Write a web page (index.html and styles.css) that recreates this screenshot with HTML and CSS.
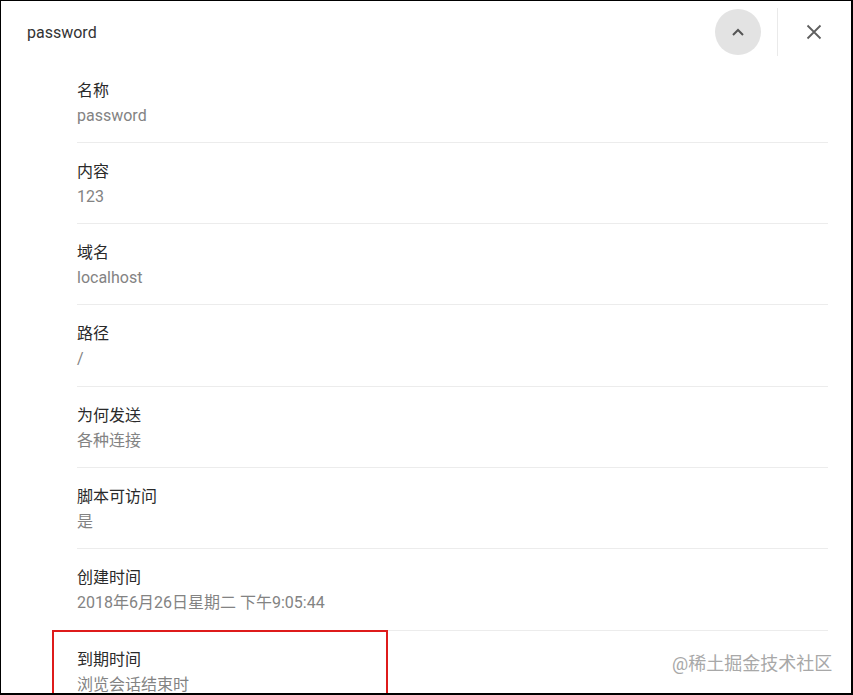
FILE: index.html
```html
<!DOCTYPE html>
<html lang="zh-CN">
<head>
<meta charset="utf-8">
<link rel="stylesheet" href="styles.css">
</head>
<body>
<div class="frame">
  <div class="header">
    <div class="title">password</div>
    <div class="actions">
      <button class="collapse" aria-label="collapse">
        <svg width="14" height="10" viewBox="0 0 14 10"><path d="M2 8 L7 3 L12 8" fill="none" stroke="#555" stroke-width="2"/></svg>
      </button>
      <div class="vdiv"></div>
      <button class="close" aria-label="close">
        <svg width="16" height="16" viewBox="0 0 16 16"><path d="M1.5 1.5 L14.5 14.5 M14.5 1.5 L1.5 14.5" fill="none" stroke="#5f5f5f" stroke-width="1.8"/></svg>
      </button>
    </div>
  </div>
  <div class="rows">
    <div class="row"><div class="label">名称</div><div class="value">password</div></div>
    <div class="row"><div class="label">内容</div><div class="value">123</div></div>
    <div class="row"><div class="label">域名</div><div class="value">localhost</div></div>
    <div class="row"><div class="label">路径</div><div class="value">/</div></div>
    <div class="row"><div class="label">为何发送</div><div class="value">各种连接</div></div>
    <div class="row"><div class="label">脚本可访问</div><div class="value">是</div></div>
    <div class="row"><div class="label">创建时间</div><div class="value">2018年6月26日星期二 下午9:05:44</div></div>
    <div class="row"><div class="label">到期时间</div><div class="value">浏览会话结束时</div></div>
  </div>
  <div class="highlight"></div>
  <div class="watermark">@稀土掘金技术社区</div>
</div>
</body>
</html>
```

FILE: styles.css
```css
html, body {
  margin: 0;
  padding: 0;
  background: #fff;
}
.frame {
  position: relative;
  width: 853px;
  height: 695px;
  box-sizing: border-box;
  border-top: 1px solid #000;
  border-left: 1px solid #000;
  border-right: 2px solid #000;
  border-bottom: 2px solid #000;
  overflow: hidden;
  font-family: Roboto, "Noto Sans CJK SC", sans-serif;
  font-size: 16px;
  background: #fff;
}
.header {
  display: flex;
  align-items: center;
  justify-content: space-between;
  height: 60.6px;
  padding: 2px 0 0 26px;
  box-sizing: border-box;
}
.title {
  color: #333;
  line-height: 24px;
  padding-top: 2px;
}
.actions {
  display: flex;
  align-items: center;
  padding-right: 19px;
}
.collapse {
  width: 46px;
  height: 46px;
  border-radius: 50%;
  border: none;
  background: #e3e3e3;
  display: flex;
  align-items: center;
  justify-content: center;
  padding: 0;
  margin-right: 16px;
}
.vdiv {
  width: 1px;
  height: 48px;
  background: #eaeaea;
}
.close {
  width: 36px;
  height: 36px;
  border: none;
  background: transparent;
  display: flex;
  align-items: center;
  justify-content: center;
  padding: 0;
  margin-left: 18px;
}
.rows {
  margin: 0 23px 0 76px;
}
.row {
  padding: 17px 0 13.3px;
  border-bottom: 1px solid #ececec;
}
.label {
  color: #2a2a2a;
  line-height: 24px;
}
.value {
  color: #838383;
  line-height: 26px;
}
.highlight {
  position: absolute;
  left: 51px;
  top: 629px;
  width: 336px;
  height: 80px;
  box-sizing: border-box;
  border: 2px solid #de1b1b;
}
.watermark {
  position: absolute;
  left: 671px;
  top: 651px;
  font-size: 18px;
  line-height: 24px;
  color: #a8a8a8;
  white-space: nowrap;
}
```
